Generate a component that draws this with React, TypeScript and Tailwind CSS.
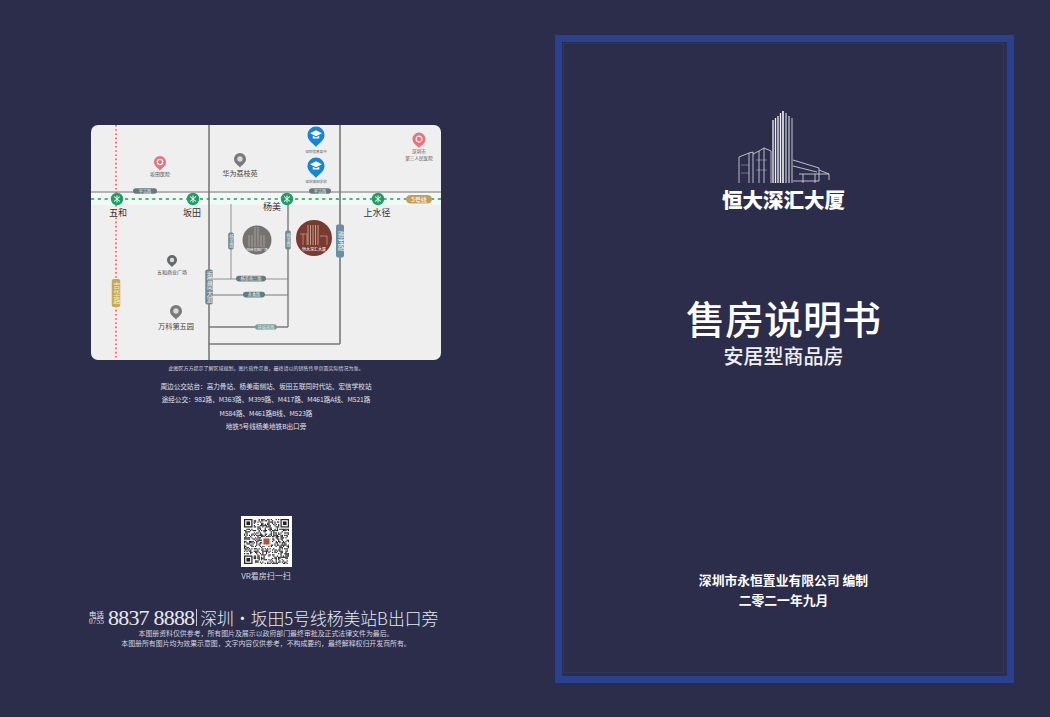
const CJK = "font-['Noto_Sans_CJK_SC','Noto_Sans',sans-serif]";
const F = "'Noto Sans CJK SC','Noto Sans',sans-serif";

function Pin({ x, y, r, color, glyph }: { x: number; y: number; r: number; color: string; glyph: 'ring' | 'cap' | 'dot' }) {
  return (
    <g transform={`translate(${x} ${y})`}>
      <path d={`M${-r} 0A${r} ${r} 0 1 1 ${r} 0C${r} ${r * 0.7} ${r * 0.35} ${r * 0.95} 0 ${r * 1.4}C${-r * 0.35} ${r * 0.95} ${-r} ${r * 0.7} ${-r} 0Z`} fill={color} />
      {glyph === 'ring' && <circle r={r * 0.45} fill="none" stroke="#fff" strokeWidth={1.2} />}
      {glyph === 'dot' && <circle r={r * 0.45} fill="#d9d9d9" />}
      {glyph === 'cap' && (
        <>
          <path d={`M${-r * 0.7} ${-r * 0.2}L0 ${-r * 0.55}L${r * 0.7} ${-r * 0.2}L0 ${r * 0.15}Z`} fill="#fff" />
          <path d={`M${-r * 0.38} ${r * 0.1}V${r * 0.42}H${r * 0.38}V${r * 0.1}L0 ${r * 0.3}Z`} fill="#fff" />
        </>
      )}
    </g>
  );
}

function Station({ x }: { x: number }) {
  return (
    <g transform={`translate(${x} 74)`}>
      <circle r={6.2} fill="#1aa064" />
      <path d="M-3-2.5L3 2.5M3-2.5L-3 2.5M0-3.5V3.5" stroke="#fff" strokeWidth={1} />
    </g>
  );
}

function HTag({ x, y, w, text, fill = '#667a7e' }: { x: number; y: number; w: number; text: string; fill?: string }) {
  return (
    <g>
      <rect x={x - w / 2} y={y - 2.8} width={w} height={5.6} rx={2.8} fill={fill} />
      <text x={x} y={y + 1.5} fontSize={4.2} fill="#e9eeee" textAnchor="middle" fontFamily={F}>{text}</text>
    </g>
  );
}

function VTag({ x, y, h, text, w = 6, fill = '#6f878e', color = '#e9eeee' }: { x: number; y: number; h: number; text: string; w?: number; fill?: string; color?: string }) {
  return (
    <g>
      <rect x={x - w / 2} y={y - h / 2} width={w} height={h} rx={2} fill={fill} />
      <text x={x} y={y} fontSize={w - 1.2} fill={color} textAnchor="middle" dominantBaseline="middle" writingMode="vertical-rl" fontFamily={F}>{text}</text>
    </g>
  );
}

function MapCanvas() {
  const lbl = { fontFamily: F, textAnchor: 'middle' as const };
  const towers = [-6, -3.5, -1, 1.5, 4];
  return (
    <svg width={350} height={235} viewBox="0 0 350 235" className="block rounded-[7px] bg-[#efeff0]">
      <rect x={20} y={0} width={10} height={235} fill="#f6ecec" />
      <line x1={25} y1={0} x2={25} y2={235} stroke="#d8465c" strokeWidth={1.4} strokeDasharray="1.6 2.6" />
      <rect x={0} y={68} width={350} height={12} fill="#f2f8f5" />

      <g stroke="#77797b" fill="none">
        <line x1={0} y1={67} x2={350} y2={67} strokeWidth={1.2} />
        <line x1={118} y1={0} x2={118} y2={235} strokeWidth={1.6} />
        <line x1={249} y1={0} x2={249} y2={219} strokeWidth={1.6} />
        <line x1={118} y1={219} x2={249} y2={219} strokeWidth={1.6} />
        <line x1={197} y1={74} x2={197} y2={202} strokeWidth={1.4} />
        <line x1={118} y1={202} x2={197} y2={202} strokeWidth={1.3} />
        <line x1={118} y1={170} x2={197} y2={170} strokeWidth={1} />
        <line x1={118} y1={154} x2={197} y2={154} strokeWidth={0.8} />
        <line x1={140} y1={79} x2={140} y2={154} strokeWidth={0.8} />
      </g>
      <line x1={0} y1={74} x2={350} y2={74} stroke="#1f9b68" strokeWidth={1.3} strokeDasharray="3.2 3.6" />

      <Station x={26} />
      <Station x={102} />
      <Station x={196} />
      <Station x={287} />

      <HTag x={54} y={66} w={24} text="平吉路" />
      <HTag x={229} y={66} w={22} text="平吉路" />
      <rect x={315} y={70} width={26} height={8.6} rx={4.3} fill="#c79f5d" />
      <text x={328} y={76.6} fontSize={6} fill="#fff" {...lbl}>5号线</text>

      <text x={27} y={91} fontSize={9} fill="#333" {...lbl}>五和</text>
      <text x={101} y={91} fontSize={9} fill="#333" {...lbl}>坂田</text>
      <text x={181} y={85} fontSize={9} fill="#333" {...lbl}>杨美</text>
      <text x={286} y={91} fontSize={9} fill="#333" {...lbl}>上水径</text>

      <Pin x={69} y={37} r={6} color="#e8727f" glyph="ring" />
      <text x={69} y={51} fontSize={5} fill="#555" {...lbl}>坂田医院</text>
      <Pin x={149} y={34} r={6} color="#77797b" glyph="dot" />
      <text x={149} y={51} fontSize={7} fill="#444" {...lbl}>华为荔枝苑</text>
      <Pin x={225} y={10} r={8.5} color="#1486d4" glyph="cap" />
      <text x={225} y={28} fontSize={3.6} fill="#555" {...lbl}>深圳信息高中</text>
      <Pin x={225} y={41} r={8.5} color="#1486d4" glyph="cap" />
      <text x={225} y={58} fontSize={3.6} fill="#555" {...lbl}>深圳坂田学校</text>
      <Pin x={328} y={14} r={6.5} color="#e8727f" glyph="ring" />
      <text x={328} y={28} fontSize={4.6} fill="#555" {...lbl}>深圳市</text>
      <text x={328} y={35} fontSize={4.6} fill="#555" {...lbl}>第三人民医院</text>
      <Pin x={81} y={135} r={5} color="#66696b" glyph="dot" />
      <text x={81} y={149} fontSize={5} fill="#444" {...lbl}>五和商业广场</text>
      <Pin x={85} y={186} r={6} color="#77797b" glyph="dot" />
      <text x={85} y={204} fontSize={7.2} fill="#444" {...lbl}>万科第五园</text>

      <VTag x={25} y={168} h={28} w={8.5} text="吉华路" fill="#c9a94f" color="#f7eecb" />
      <VTag x={118} y={162} h={35} w={7.5} text="坂雪岗大道" />
      <VTag x={140} y={116} h={17} w={5.6} text="杨美路" />
      <VTag x={197} y={115} h={19} w={5.6} text="杨美路" />
      <VTag x={249} y={116} h={33} w={8} text="雅宝路" fill="#6b8ea3" />
      <HTag x={160} y={153.6} w={30} text="杨美南三路" />
      <HTag x={163} y={169.6} w={22} text="永香路" fill="#5c8082" />
      <HTag x={175} y={202} w={22} text="环城南路" fill="#789a9a" />

      <circle cx={166} cy={115} r={14.5} fill="#76726f" />
      <g stroke="#b0adaa" strokeWidth={0.8}>
        {[158, 161, 164, 167, 170, 173].map((x, i) => (
          <line key={x} x1={x} y1={i === 2 || i === 3 ? 102 : 110} x2={x} y2={122} />
        ))}
      </g>
      <text x={166} y={126} fontSize={3.6} fill="#eee" {...lbl}>招商花园广场</text>

      <circle cx={223} cy={113} r={18} fill="#7a3a2e" />
      <g stroke="#d8b5ab" strokeWidth={0.8}>
        {towers.map((d) => (
          <line key={d} x1={223 + d} y1={100} x2={223 + d} y2={120} />
        ))}
        <path d="M209 109h7v11M212 109v11M229 111h7v9" fill="none" strokeWidth={0.6} />
      </g>
      <text x={223} y={126} fontSize={4} fill="#fff" {...lbl}>恒大深汇大厦</text>
    </svg>
  );
}

function Qr() {
  const n = 37;
  let seed = 7331;
  const rand = () => {
    seed = (seed * 16807) % 2147483647;
    return seed / 2147483647;
  };
  const cells: React.ReactNode[] = [];
  const inFinder = (r: number, c: number) =>
    (r < 8 && c < 8) || (r < 8 && c >= n - 8) || (r >= n - 8 && c < 8);
  for (let r = 0; r < n; r++)
    for (let c = 0; c < n; c++)
      if (!inFinder(r, c) && rand() > 0.52)
        cells.push(<rect key={`${r}-${c}`} x={c} y={r} width={1} height={1} fill="#222" />);
  const finder = (x: number, y: number) => (
    <g key={`${x}-${y}`}>
      <rect x={x} y={y} width={7} height={7} fill="#222" />
      <rect x={x + 1} y={y + 1} width={5} height={5} fill="#fff" />
      <rect x={x + 2} y={y + 2} width={3} height={3} fill="#222" />
    </g>
  );
  return (
    <div className="w-[51px] h-[51px] bg-white p-[3px]">
      <svg width={45} height={45} viewBox={`0 0 ${n} ${n}`} className="block">
        {cells}
        {finder(0, 0)}
        {finder(n - 7, 0)}
        {finder(0, n - 7)}
        <rect x={15} y={15} width={7} height={7} fill="#fff" />
        <rect x={16} y={16} width={5} height={5} fill="#a8573f" />
      </svg>
    </div>
  );
}

function Logo() {
  return (
    <svg width={100} height={75} viewBox="0 0 100 75" className="block">
      <g fill="none" stroke="#dfe1ea" strokeWidth={0.8}>
        <path d="M2 73V47L12 43V73M12 43L16 42V73" />
        <path d="M16 44L22 41V73M22 41L27 38V73M27 38L34 41V73" />
        <path d="M4 55H12M4 63H12M19 50H30M19 60H30" strokeWidth={0.4} />
        <path d="M56 50L82 58V71H56M56 56L80 62M62 64H92M66 64V73M78 64V73M82 60L92 64V70" />
      </g>
      <g stroke="#f1f2f6" strokeWidth={1.3}>
        <line x1={36} y1={10} x2={36} y2={73} />
        <line x1={38.5} y1={8} x2={38.5} y2={73} />
        <line x1={41} y1={6} x2={41} y2={73} />
        <line x1={43.5} y1={3} x2={43.5} y2={73} />
        <line x1={46} y1={1} x2={46} y2={73} strokeWidth={1.6} />
        <line x1={49} y1={3} x2={49} y2={73} strokeWidth={1} />
        <line x1={52} y1={6} x2={52} y2={73} strokeWidth={1} />
        <line x1={55} y1={8} x2={55} y2={73} strokeWidth={0.8} />
      </g>
    </svg>
  );
}

export default function App() {
  return (
    <div className={`w-[1050px] h-[717px] flex overflow-hidden bg-[#2b2d4b] ${CJK}`}>
      <div className="w-[532px] flex flex-col items-start pl-[91px] pt-[125px]">
        <MapCanvas />
        <div className="w-[350px] flex flex-col items-center text-[#e3e4ea]">
          <p className="mt-[4px] text-[5px] leading-[7px] text-[#d4d5df]">此图区方方提示了解区域规划，图片软件示意，最终请以的销售传单页面实际情况为准。</p>
          <p className="mt-[9px] text-[6.6px] leading-[13.4px]">周边公交站台：高力骨站、杨美南侧站、坂田五联同时代站、宏信学校站</p>
          <p className="text-[6.6px] leading-[13.4px]">途经公交：982路、M363路、M399路、M417路、M461路A线、M521路</p>
          <p className="text-[6.6px] leading-[13.4px]">M584路、M461路B线、M523路</p>
          <p className="text-[6.6px] leading-[13.4px]">地铁5号线杨美地铁B出口旁</p>
        </div>
        <div className="w-[350px] mt-[82px] flex flex-col items-center">
          <Qr />
          <p className="mt-[3px] text-[8px] leading-[12px] text-[#d4d5df]">VR看房扫一扫</p>
        </div>
        <div className="mt-[24px] -ml-[5px] flex items-center whitespace-nowrap text-[#e7e8ee] h-[24px]">
          <div className="w-[21px] flex flex-col items-center text-[7.4px] leading-[8px]">
            <span>电话</span>
            <span className="font-['Liberation_Serif',serif]">0755</span>
          </div>
          <span className="ml-[1px] font-['Liberation_Serif',serif] text-[22px] leading-[24px] tracking-[-0.8px]">8837 8888</span>
          <span className="ml-[2px] w-px h-[17px] bg-[#c9cad6]" />
          <span className="ml-[3px] text-[16.8px] leading-[24px] font-light">深圳·坂田5号线杨美站B出口旁</span>
        </div>
        <div className="w-[350px] -mt-[2px] flex flex-col items-center text-[6.9px] leading-[10px] text-[#d4d5df]">
          <p>本图册资料仅供参考，所有图片及展示以政府部门最终审批及正式法律文件为最后。</p>
          <p>本图册所有图片均为效果示意图，文字内容仅供参考，不构成要约，最终解释权归开发商所有。</p>
        </div>
      </div>

      <div className="w-[518px] pl-[23px] pt-[35px]">
        <div className="w-[459px] h-[648px] border-[7px] border-[#2a4192]">
          <div className="h-[630px] ml-[1px] mr-[3px] mt-[1px] border border-[#30355a] flex flex-col items-center">
            <div className="mt-[66px] ml-[7px]">
              <Logo />
            </div>
            <p className="mt-[1px] text-[20.5px] leading-[26px] font-black text-white">恒大深汇大厦</p>
            <h1 className="mt-[80px] text-[39px] leading-[50px] font-medium text-white">售房说明书</h1>
            <p className="mt-[0px] text-[20px] leading-[28px] font-medium text-[#f0f0f4]">安居型商品房</p>
            <p className="mt-[200px] text-[12.8px] leading-[20px] font-bold text-white">深圳市永恒置业有限公司 编制</p>
            <p className="text-[12.8px] leading-[20px] font-bold text-white">二零二一年九月</p>
          </div>
        </div>
      </div>
    </div>
  );
}
